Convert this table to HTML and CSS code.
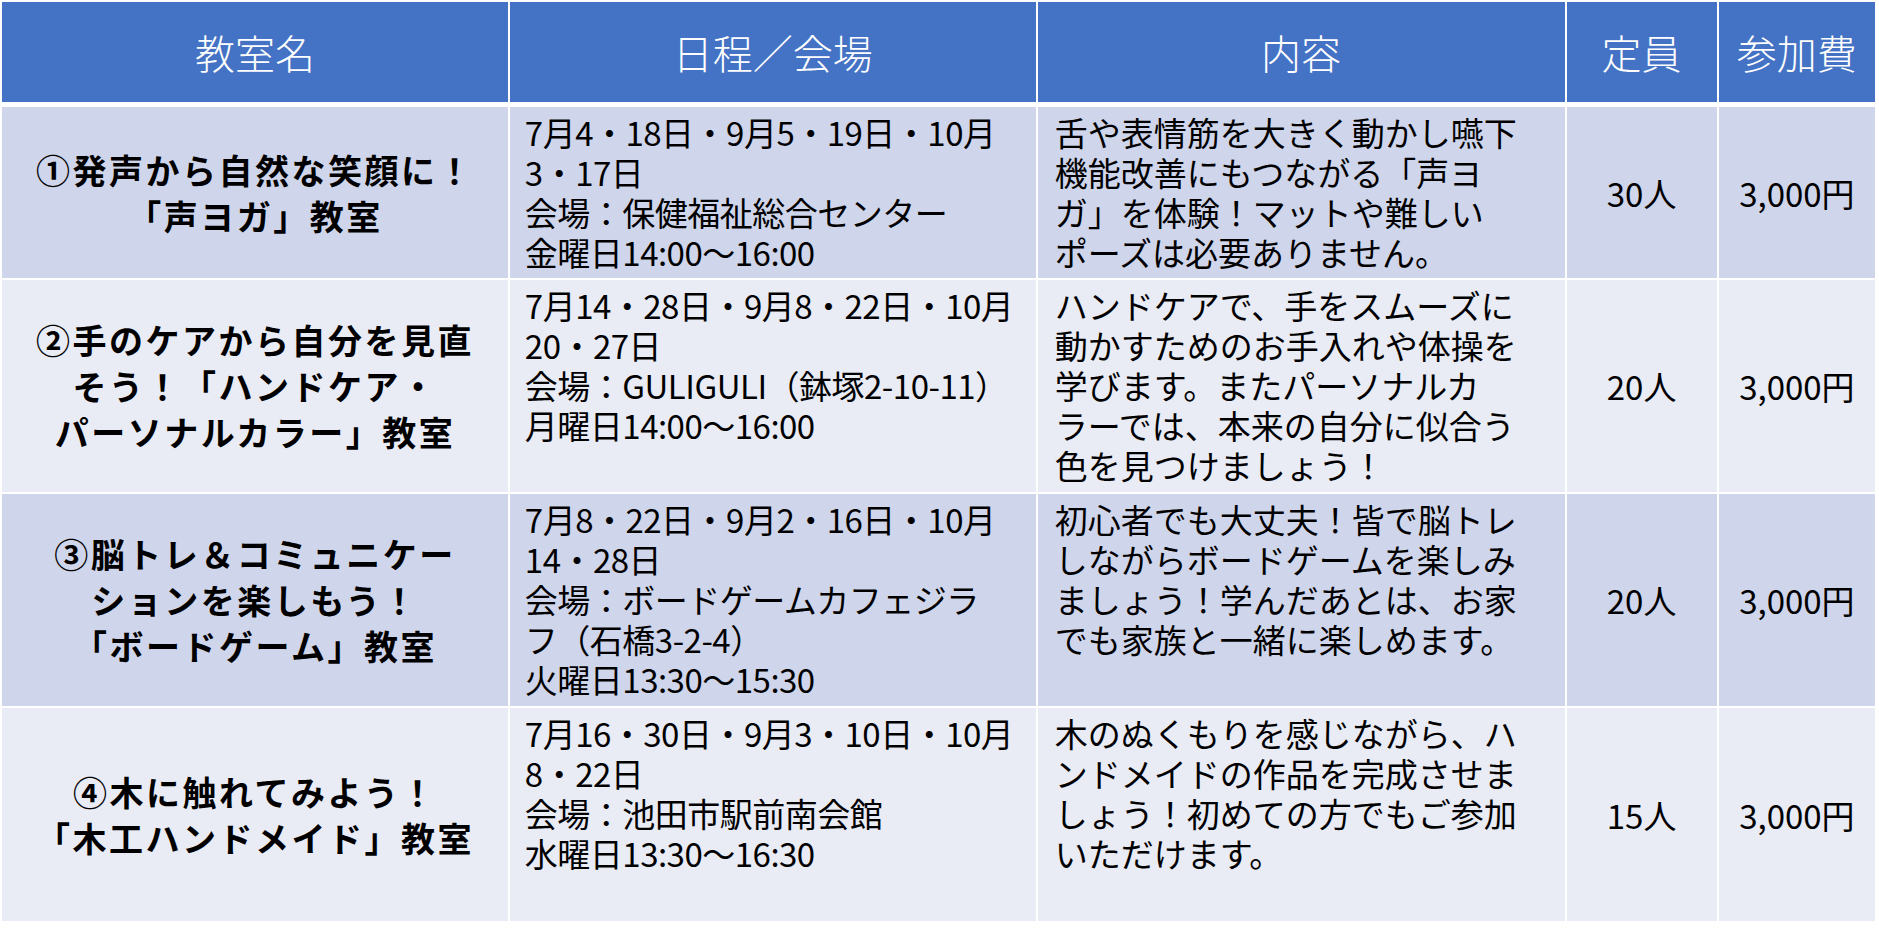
FILE: index.html
```html
<!DOCTYPE html>
<html lang="ja">
<head>
<meta charset="utf-8">
<title>教室一覧</title>
<link rel="stylesheet" href="styles.css">
</head>
<body>
<table class="schedule">
  <colgroup>
    <col class="c-name">
    <col class="c-date">
    <col class="c-desc">
    <col class="c-cap">
    <col class="c-fee">
  </colgroup>
  <thead>
    <tr class="head-row">
      <th>教室名</th>
      <th>日程／会場</th>
      <th>内容</th>
      <th>定員</th>
      <th>参加費</th>
    </tr>
  </thead>
  <tbody>
    <tr class="row r1 band-a">
      <td class="name">①発声から自然な笑顔に！<br>「声ヨガ」教室</td>
      <td class="text date">7月4・18日・9月5・19日・10月<br>3・17日<br>会場：保健福祉総合センター<br>金曜日14:00～16:00</td>
      <td class="text desc">舌や表情筋を大きく動かし嚥下<br>機能改善にもつながる「声ヨ<br>ガ」を体験！マットや難しい<br>ポーズは必要ありません。</td>
      <td class="num">30人</td>
      <td class="num">3,000円</td>
    </tr>
    <tr class="row r2 band-b">
      <td class="name">②手のケアから自分を見直<br>そう！「ハンドケア・<br>パーソナルカラー」教室</td>
      <td class="text date">7月14・28日・9月8・22日・10月<br>20・27日<br>会場：GULIGULI（鉢塚2-10-11）<br>月曜日14:00～16:00</td>
      <td class="text desc">ハンドケアで、手をスムーズに<br>動かすためのお手入れや体操を<br>学びます。またパーソナルカ<br>ラーでは、本来の自分に似合う<br>色を見つけましょう！</td>
      <td class="num">20人</td>
      <td class="num">3,000円</td>
    </tr>
    <tr class="row r3 band-a">
      <td class="name">③脳トレ＆コミュニケー<br>ションを楽しもう！<br>「ボードゲーム」教室</td>
      <td class="text date">7月8・22日・9月2・16日・10月<br>14・28日<br>会場：ボードゲームカフェジラ<br>フ（石橋3-2-4）<br>火曜日13:30～15:30</td>
      <td class="text desc">初心者でも大丈夫！皆で脳トレ<br>しながらボードゲームを楽しみ<br>ましょう！学んだあとは、お家<br>でも家族と一緒に楽しめます。</td>
      <td class="num">20人</td>
      <td class="num">3,000円</td>
    </tr>
    <tr class="row r4 band-b">
      <td class="name">④木に触れてみよう！<br>「木工ハンドメイド」教室</td>
      <td class="text date">7月16・30日・9月3・10日・10月<br>8・22日<br>会場：池田市駅前南会館<br>水曜日13:30～16:30</td>
      <td class="text desc">木のぬくもりを感じながら、ハ<br>ンドメイドの作品を完成させま<br>しょう！初めての方でもご参加<br>いただけます。</td>
      <td class="num">15人</td>
      <td class="num">3,000円</td>
    </tr>
  </tbody>
</table>
</body>
</html>
```

FILE: styles.css
```css
html, body {
  margin: 0;
  padding: 0;
  background: #ffffff;
}

body {
  font-family: "Noto Sans CJK JP", "Noto Sans", sans-serif;
  color: #000000;
}

.schedule {
  border-collapse: separate;
  border-spacing: 2.5px;
  table-layout: fixed;
  width: 1877px;
}

.c-name { width: 505px; }
.c-date { width: 525px; }
.c-desc { width: 526px; }
.c-cap  { width: 150px; }
.c-fee  { width: 156px; }

.head-row {
  height: 103px;
}

.head-row th {
  background: #4472c4;
  color: #ffffff;
  font-weight: 300;
  font-size: 40px;
  line-height: 48px;
  text-align: center;
  vertical-align: middle;
  padding: 0;
  border-bottom: 3px solid #ffffff;
  white-space: nowrap;
}

.band-a td { background: #cfd5ea; }
.band-b td { background: #e9ebf5; }

.r1 { height: 171px; }
.r2 { height: 212px; }
.r3 { height: 212px; }
.r4 { height: 213px; }

.row td {
  padding: 0;
  white-space: nowrap;
}

.name {
  font-weight: 700;
  font-size: 34px;
  line-height: 46px;
  letter-spacing: 2.5px;
  text-align: center;
  vertical-align: middle;
}

.row .text {
  font-size: 33px;
  line-height: 40px;
  vertical-align: top;
  text-align: left;
  padding: 5px 0 0 15px;
}

.row .date {
  letter-spacing: -0.5px;
}

.row .desc {
  padding-left: 17px;
}

.num {
  font-size: 33px;
  line-height: 40px;
  text-align: center;
  vertical-align: middle;
}
```
